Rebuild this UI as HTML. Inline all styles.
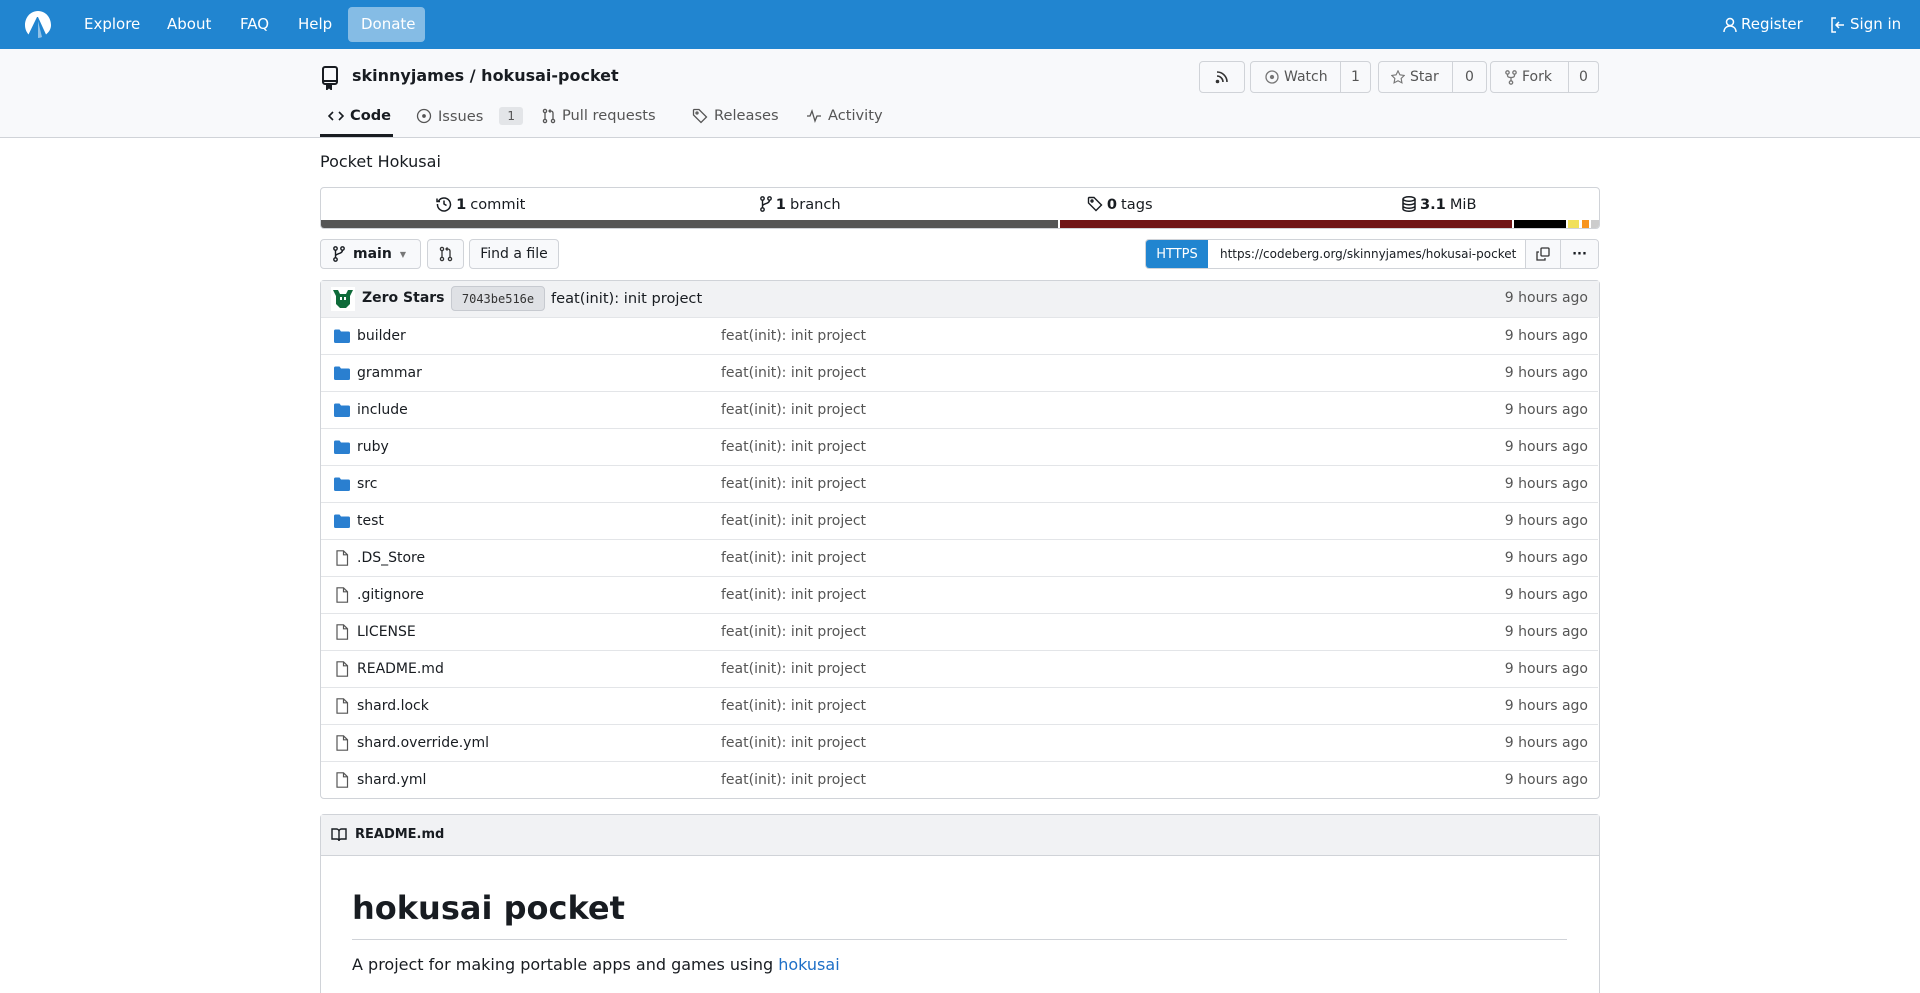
<!DOCTYPE html>
<html style="overflow:hidden;height:993px"><head><meta charset="utf-8"><style>
*{box-sizing:border-box;margin:0;padding:0}
body{width:1920px;height:993px;overflow:hidden;background:#fff;font-family:"DejaVu Sans","Liberation Sans",sans-serif;font-size:14px;color:#181c21;position:relative}
.a{position:absolute}
.nav{left:0;top:0;width:1920px;height:49px;background:#2185d0}
.nav .t{color:#fff;font-size:15px;top:15px}
.hdr{left:0;top:49px;width:1920px;height:89px;background:#f8f9fb;border-bottom:1px solid #d0d3d8}
.btn{border:1px solid #d0d3d8;border-radius:4px;background:#f8f9fb;height:32px;display:flex;align-items:center;color:#555}
.tab{top:107px;font-size:14.6px;color:#555;display:flex;align-items:center;gap:6px}
svg{display:block}
.row{position:absolute;left:321px;width:1277px;height:37px;border-top:1px solid #e3e5e8}
.row .n{position:absolute;left:36px;top:10px}
.row .m{position:absolute;left:400px;top:10px;color:#555}
.row .tm{position:absolute;right:10px;top:10px;color:#555}
.row .ic{position:absolute;left:13px;top:11px}
.st{flex:1;display:flex;justify-content:center;align-items:center;gap:4px}
</style></head><body>
<div class="a nav">
 <svg class="a" style="left:22px;top:9px" width="32" height="32" viewBox="0 0 32 32"><path d="M16 2C8 2 3 9 3 16c0 4 1.5 7 3.5 9.5L15 8l1 0 8 17.5C27 23 29 20 29 16 29 9 24 2 16 2z" fill="#fff"/><path d="M16 12l4 16c-1 .5-3 1-4 1z" fill="#fff" opacity=".5"/></svg>
 <div class="a t" style="left:84px">Explore</div>
 <div class="a t" style="left:167px">About</div>
 <div class="a t" style="left:240px">FAQ</div>
 <div class="a t" style="left:298px">Help</div>
 <div class="a" style="left:348px;top:7px;width:77px;height:35px;background:rgba(255,255,255,.45);border-radius:4px"></div>
 <div class="a t" style="left:361px">Donate</div>
 <svg class="a" style="left:1723px;top:17px" width="14" height="16" viewBox="0 0 14 16" fill="none" stroke="#fff" stroke-width="1.5"><circle cx="7" cy="5" r="3.5"/><path d="M1 15c0-4 3-6 6-6s6 2 6 6"/></svg>
 <div class="a t" style="left:1741px">Register</div>
 <svg class="a" style="left:1831px;top:17px" width="14" height="16" viewBox="0 0 14 16" fill="none" stroke="#fff" stroke-width="1.5"><path d="M5 1H1v14h4M13 8H5M8 5L5 8l3 3"/></svg>
 <div class="a t" style="left:1850px">Sign in</div>
</div>
<div class="a hdr"></div>
<svg class="a" style="left:321px;top:66px" width="18" height="24" viewBox="0 0 18 24" fill="none" stroke="#181c21" stroke-width="2"><rect x="2" y="1" width="14" height="17" rx="2"/><path d="M2 15h14M6 18v5l2-2 2 2v-5" fill="#181c21"/></svg>
<div class="a" style="left:352px;top:66px;font-size:16px;font-weight:bold">skinnyjames / hokusai-pocket</div>
<div class="a btn" style="left:1199px;top:61px;width:46px;justify-content:center"><svg width="16" height="16" viewBox="0 0 16 16" fill="none" stroke="#333" stroke-width="1.6"><path d="M3 3a10 10 0 0 1 10 10M3 7a6 6 0 0 1 6 6"/><circle cx="3.5" cy="12.5" r="1" fill="#333"/></svg></div>
<div class="a btn" style="left:1250px;top:61px;width:121px"><div style="width:90px;display:flex;align-items:center;gap:5px;padding-left:14px;border-right:1px solid #d0d3d8;height:100%"><svg width="14" height="14" viewBox="0 0 14 14" fill="none" stroke="#777" stroke-width="1.3"><circle cx="7" cy="7" r="6"/><circle cx="7" cy="7" r="1.5" fill="#777"/></svg>Watch</div><div style="flex:1;text-align:center">1</div></div>
<div class="a btn" style="left:1378px;top:61px;width:109px"><div style="width:74px;display:flex;align-items:center;gap:5px;padding-left:12px;border-right:1px solid #d0d3d8;height:100%"><svg width="14" height="14" viewBox="0 0 16 16" fill="none" stroke="#777" stroke-width="1.3"><path d="M8 1l2.2 4.5 5 .7-3.6 3.5.9 5L8 12.3 3.5 14.7l.9-5L.8 6.2l5-.7z"/></svg>Star</div><div style="flex:1;text-align:center">0</div></div>
<div class="a btn" style="left:1490px;top:61px;width:109px"><div style="width:78px;display:flex;align-items:center;gap:5px;padding-left:14px;border-right:1px solid #d0d3d8;height:100%"><svg width="12" height="15" viewBox="0 0 12 15" fill="none" stroke="#777" stroke-width="1.3"><circle cx="2.5" cy="2.5" r="1.7"/><circle cx="9.5" cy="2.5" r="1.7"/><circle cx="6" cy="12.5" r="1.7"/><path d="M2.5 4v1.5c0 1.5 1 2 3.5 2s3.5-.5 3.5-2V4M6 7.5v3"/></svg>Fork</div><div style="flex:1;text-align:center">0</div></div>
<div class="a tab" style="left:328px;color:#181c21;font-weight:bold"><svg width="16" height="16" viewBox="0 0 16 16" fill="none" stroke="#181c21" stroke-width="1.6"><path d="M5 4L1 8l4 4M11 4l4 4-4 4"/></svg>Code</div>
<div class="a" style="left:320px;top:134px;width:73px;height:3px;background:#181c21"></div>
<div class="a tab" style="left:416px"><svg width="16" height="16" viewBox="0 0 16 16" fill="none" stroke="#555" stroke-width="1.3"><circle cx="8" cy="8" r="6.5"/><circle cx="8" cy="8" r="1.2" fill="#555"/></svg>Issues<span style="background:#e3e5e8;border-radius:3px;font-size:12px;padding:2px 8px;margin-left:10px">1</span></div>
<div class="a tab" style="left:542px"><svg width="14" height="16" viewBox="0 0 14 16" fill="none" stroke="#555" stroke-width="1.3"><circle cx="3" cy="3" r="1.6"/><circle cx="3" cy="13" r="1.6"/><circle cx="11" cy="13" r="1.6"/><path d="M3 4.6v6.8M11 11.4V5c0-1-1-2-2-2H7M8.5 1.5L7 3l1.5 1.5"/></svg>Pull requests</div>
<div class="a tab" style="left:692px"><svg width="16" height="16" viewBox="0 0 16 16" fill="none" stroke="#555" stroke-width="1.3"><path d="M1.5 2v5l7.5 7.5 5.5-5.5L7 1.5H2z"/><circle cx="5" cy="5" r="1"/></svg>Releases</div>
<div class="a tab" style="left:806px"><svg width="16" height="16" viewBox="0 0 16 16" fill="none" stroke="#555" stroke-width="1.3"><path d="M1 8h3l2-5 3 10 2-5h4"/></svg>Activity</div>

<div class="a" style="left:320px;top:152px;font-size:16px">Pocket Hokusai</div>

<div class="a" style="left:320px;top:187px;width:1280px;height:42px;border:1px solid #d0d3d8;border-radius:4px;overflow:hidden">
 <div style="display:flex;height:32px;align-items:center;font-size:14.6px">
  <div class="st"><svg width="16" height="16" viewBox="0 0 16 16" fill="none" stroke="#181c21" stroke-width="1.5"><path d="M2.5 5A6.5 6.5 0 1 1 1.5 8M1 2.5V5.5h3M8 4.5V8l2.5 1.5"/></svg><b>1</b> commit</div>
  <div class="st"><svg width="12" height="16" viewBox="0 0 12 16" fill="none" stroke="#181c21" stroke-width="1.4"><circle cx="2.5" cy="2.5" r="1.7"/><circle cx="9.5" cy="2.5" r="1.7"/><circle cx="2.5" cy="13.5" r="1.7"/><path d="M2.5 4.2v7.6M9.5 4.2c0 4-7 3-7 6"/></svg><b>1</b> branch</div>
  <div class="st"><svg width="16" height="16" viewBox="0 0 16 16" fill="none" stroke="#181c21" stroke-width="1.4"><path d="M1.5 2v5l7.5 7.5 5.5-5.5L7 1.5H2z"/><circle cx="5" cy="5" r="1"/></svg><b>0</b> tags</div>
  <div class="st"><svg width="14" height="16" viewBox="0 0 14 16" fill="none" stroke="#181c21" stroke-width="1.5"><ellipse cx="7" cy="3" rx="6" ry="2.2"/><path d="M1 3v10c0 1.2 2.7 2.2 6 2.2s6-1 6-2.2V3M1 6.5c0 1.2 2.7 2.2 6 2.2s6-1 6-2.2M1 10c0 1.2 2.7 2.2 6 2.2s6-1 6-2.2"/></svg><b>3.1</b> MiB</div>
 </div>
 <div style="display:flex;height:9px">
  <div style="width:737px;background:#555"></div><div style="width:2px"></div>
  <div style="width:452px;background:#701516"></div><div style="width:2px"></div>
  <div style="width:52px;background:#000"></div><div style="width:2px"></div>
  <div style="width:11px;background:#f1e05a"></div><div style="width:3px"></div>
  <div style="width:7px;background:#f7941e"></div><div style="width:2px"></div>
  <div style="flex:1;background:#ccc"></div>
 </div>
</div>

<div class="a btn" style="left:320px;top:239px;width:101px;height:30px;color:#181c21;padding-left:12px;gap:8px"><svg width="12" height="16" viewBox="0 0 12 16" fill="none" stroke="#181c21" stroke-width="1.4"><circle cx="2.5" cy="2.5" r="1.7"/><circle cx="9.5" cy="2.5" r="1.7"/><circle cx="2.5" cy="13.5" r="1.7"/><path d="M2.5 4.2v7.6M9.5 4.2c0 4-7 3-7 6"/></svg><b>main</b><span style="font-size:8px;color:#777">▼</span></div>
<div class="a btn" style="left:427px;top:239px;width:37px;height:30px;justify-content:center"><svg width="14" height="16" viewBox="0 0 14 16" fill="none" stroke="#333" stroke-width="1.3"><circle cx="3" cy="3" r="1.6"/><circle cx="3" cy="13" r="1.6"/><circle cx="11" cy="13" r="1.6"/><path d="M3 4.6v6.8M11 11.4V5c0-1-1-2-2-2H7M8.5 1.5L7 3l1.5 1.5"/></svg></div>
<div class="a btn" style="left:469px;top:239px;width:90px;height:30px;justify-content:center;color:#181c21">Find a file</div>
<div class="a" style="left:1145px;top:239px;width:454px;height:30px;border:1px solid #d0d3d8;border-radius:4px;display:flex;overflow:hidden;font-size:13px">
 <div style="width:62px;background:#2185d0;color:#fff;display:flex;align-items:center;justify-content:center">HTTPS</div>
 <div style="width:318px;display:flex;align-items:center;padding-left:12px;font-size:12px;border-right:1px solid #d0d3d8;white-space:nowrap;overflow:hidden">https://codeberg.org/skinnyjames/hokusai-pocket</div>
 <div style="width:35px;background:#f8f9fb;border-right:1px solid #d0d3d8;display:flex;align-items:center;justify-content:center"><svg width="14" height="14" viewBox="0 0 14 14" fill="none" stroke="#333" stroke-width="1.3"><rect x="5" y="1" width="8" height="8" rx="1"/><path d="M3 5H1v8h8v-2"/></svg></div>
 <div style="flex:1;background:#f8f9fb;display:flex;align-items:center;justify-content:center;font-weight:bold">···</div>
</div>

<div class="a" style="left:320px;top:280px;width:1280px;height:519px;border:1px solid #d0d3d8;border-radius:4px"></div>
<div class="a" style="left:321px;top:281px;width:1278px;height:36px;background:#f1f2f4"></div>
<svg class="a" style="left:331px;top:287px" width="24" height="24" viewBox="0 0 24 24"><rect width="24" height="24" fill="#fff"/><path d="M2 3h5l2 4h6l2-4h5l-3 6v8l-4 4H9l-4-4V9z" fill="#0f6b3a"/><rect x="9" y="10" width="2" height="3" fill="#fff"/><rect x="13" y="10" width="2" height="3" fill="#fff"/></svg>
<div class="a" style="left:362px;top:290px;font-weight:bold;font-size:14px">Zero Stars</div>
<div class="a" style="left:451px;top:286px;width:94px;height:25px;background:#dfe1e5;border:1px solid #c7cad0;border-radius:4px;font-family:'DejaVu Sans Mono','Liberation Mono',monospace;font-size:12px;display:flex;align-items:center;justify-content:center;color:#333">7043be516e</div>
<div class="a" style="left:551px;top:290px;font-size:14.6px">feat(init): init project</div>
<div class="a" style="right:332px;top:290px;color:#555">9 hours ago</div>

<div id="rows"></div>
<script>
const names=[["builder",1],["grammar",1],["include",1],["ruby",1],["src",1],["test",1],[".DS_Store",0],[".gitignore",0],["LICENSE",0],["README.md",0],["shard.lock",0],["shard.override.yml",0],["shard.yml",0]];
const folder='<svg width="16" height="14" viewBox="0 0 16 14"><path d="M0 2a1.5 1.5 0 0 1 1.5-1.5h4l1.5 2h7.5A1.5 1.5 0 0 1 16 4v8.5a1.5 1.5 0 0 1-1.5 1.5h-13A1.5 1.5 0 0 1 0 12.5z" fill="#2a7fd0"/></svg>';
const file='<svg width="14" height="16" viewBox="0 0 14 16" fill="none" stroke="#555" stroke-width="1.2"><path d="M2 .8h6.5l4 4V15.2H2zM8.5.8v4h4"/></svg>';
let h='';names.forEach((n,i)=>{h+=`<div class="row" style="top:${317+i*37}px"><div class="ic" style="${n[1]?'top:11px':'top:10px;left:14px'}">${n[1]?folder:file}</div><div class="n">${n[0]}</div><div class="m">feat(init): init project</div><div class="tm">9 hours ago</div></div>`});
document.getElementById('rows').innerHTML=h;
</script>

<div class="a" style="left:320px;top:814px;width:1280px;height:179px;border:1px solid #d0d3d8;border-bottom:none;border-radius:4px 4px 0 0"></div>
<div class="a" style="left:321px;top:815px;width:1278px;height:41px;background:#f1f2f4;border-bottom:1px solid #d0d3d8"></div>
<svg class="a" style="left:331px;top:828px" width="16" height="14" viewBox="0 0 16 14" fill="none" stroke="#181c21" stroke-width="1.4"><path d="M1 1h4.5A2.5 2.5 0 0 1 8 3.5V13a2 2 0 0 0-2-2H1zM15 1h-4.5A2.5 2.5 0 0 0 8 3.5V13a2 2 0 0 1 2-2h5z"/></svg>
<div class="a" style="left:355px;top:827px;font-size:13px;font-weight:bold">README.md</div>
<div class="a" style="left:352px;top:889px;font-size:32px;font-weight:bold">hokusai pocket</div>
<div class="a" style="left:352px;top:939px;width:1215px;height:1px;background:#d0d3d8"></div>
<div class="a" style="left:352px;top:955px;font-size:16px">A project for making portable apps and games using <span style="color:#1e6fc7">hokusai</span></div>
</body></html>
